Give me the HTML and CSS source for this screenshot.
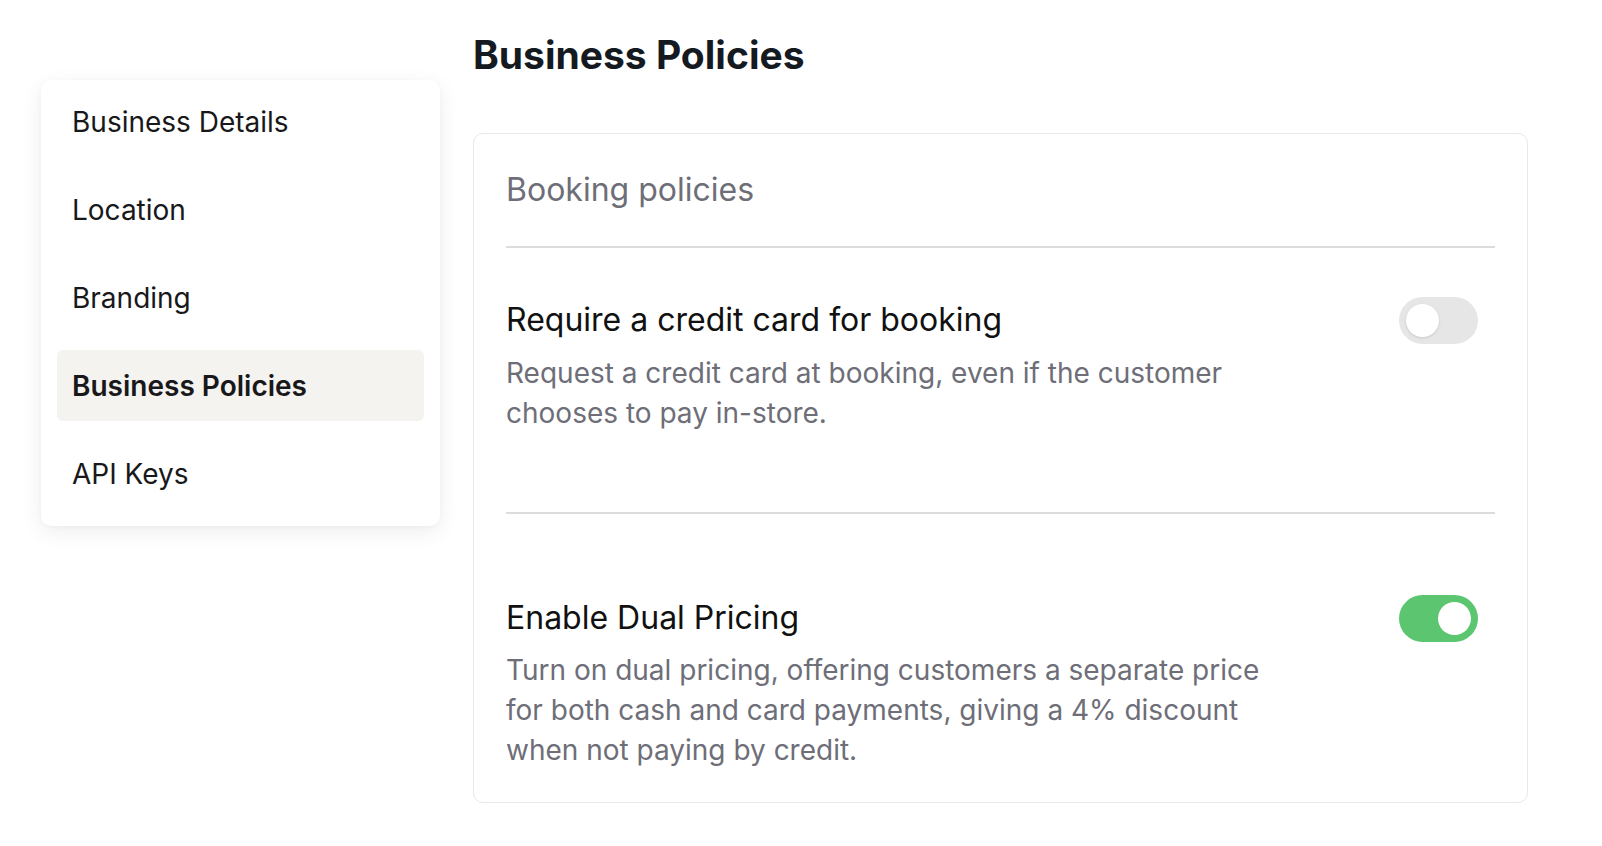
FILE: index.html
```html
<!DOCTYPE html>
<html lang="en">
<head>
<meta charset="utf-8">
<title>Business Policies</title>
<link rel="stylesheet" href="styles.css">
</head>
<body>
<div class="page">
  <nav class="sidebar">
    <a class="nav-item">Business Details</a>
    <a class="nav-item">Location</a>
    <a class="nav-item">Branding</a>
    <a class="nav-item active">Business Policies</a>
    <a class="nav-item">API Keys</a>
  </nav>
  <main class="main">
    <h1 class="page-title">Business Policies</h1>
    <section class="card">
      <h2 class="card-title">Booking policies</h2>
      <div class="divider"></div>
      <div class="setting setting-first">
        <div class="setting-head">
          <div class="setting-title">Require a credit card for booking</div>
          <span class="toggle"><span class="knob"></span></span>
        </div>
        <p class="setting-desc">Request a credit card at booking, even if the customer chooses to pay in-store.</p>
      </div>
      <div class="divider divider-mid"></div>
      <div class="setting setting-second">
        <div class="setting-head">
          <div class="setting-title">Enable Dual Pricing</div>
          <span class="toggle on"><span class="knob"></span></span>
        </div>
        <p class="setting-desc setting-desc-tight">Turn on dual pricing, offering customers a separate price for both cash and card payments, giving a 4% discount when not paying by credit.</p>
      </div>
    </section>
  </main>
</div>
</body>
</html>
```

FILE: styles.css
```css
* { box-sizing: border-box; }
html, body {
  margin: 0;
  padding: 0;
  background: #ffffff;
  font-family: Inter, "Noto Sans", "Liberation Sans", sans-serif;
  color: #18181b;
}
.page {
  display: flex;
  align-items: flex-start;
  gap: 33px;
  padding-left: 41px;
}
.sidebar {
  margin-top: 80px;
  width: 399px;
  background: #ffffff;
  border-radius: 10px;
  box-shadow: 0 6px 22px rgba(0, 0, 0, 0.07), 0 1px 4px rgba(0, 0, 0, 0.03);
  padding: 6px 16px 17px 16px;
  display: flex;
  flex-direction: column;
  gap: 17px;
}
.nav-item {
  display: flex;
  align-items: center;
  height: 71px;
  padding-left: 15px;
  font-size: 28px;
  color: #18181b;
  border-radius: 6px;
  cursor: pointer;
}
.nav-item.active {
  background: #f4f3f0;
  font-weight: 600;
}
.main {
  width: 1055px;
  padding-top: 33px;
}
.page-title {
  margin: 0;
  font-size: 39px;
  line-height: 44px;
  font-weight: 700;
  color: #141a1f;
}
.card {
  margin-top: 56px;
  border: 1px solid #e8e8e8;
  border-radius: 10px;
  padding: 36px 32px 32px 32px;
}
.card-title {
  margin: 0;
  font-size: 32px;
  line-height: 40px;
  font-weight: 400;
  color: #6e6e78;
}
.divider {
  height: 2px;
  background: #dcdcdc;
  margin-top: 36px;
}
.divider-mid { margin-top: 79px; }
.setting-first { margin-top: 52px; }
.setting-second { margin-top: 84px; }
.setting-head {
  display: flex;
  align-items: center;
  justify-content: space-between;
  height: 40px;
  padding-right: 17px;
}
.setting-title {
  font-size: 32px;
  line-height: 40px;
  color: #111111;
}
.setting-desc {
  margin: 13px 0 0 0;
  max-width: 762px;
  font-size: 28px;
  line-height: 40px;
  color: #6e6e78;
}
.setting-desc-tight { margin-top: 12px; }
.toggle {
  position: relative;
  display: block;
  width: 79px;
  height: 47px;
  border-radius: 24px;
  background: #e6e6e6;
  flex: none;
}
.toggle .knob {
  position: absolute;
  top: 7px;
  left: 7px;
  width: 33px;
  height: 33px;
  border-radius: 50%;
  background: #ffffff;
  box-shadow: 0 1px 3px rgba(0, 0, 0, 0.12);
}
.toggle.on { background: #5cc56f; }
.toggle.on .knob { left: 39px; box-shadow: none; }
```
